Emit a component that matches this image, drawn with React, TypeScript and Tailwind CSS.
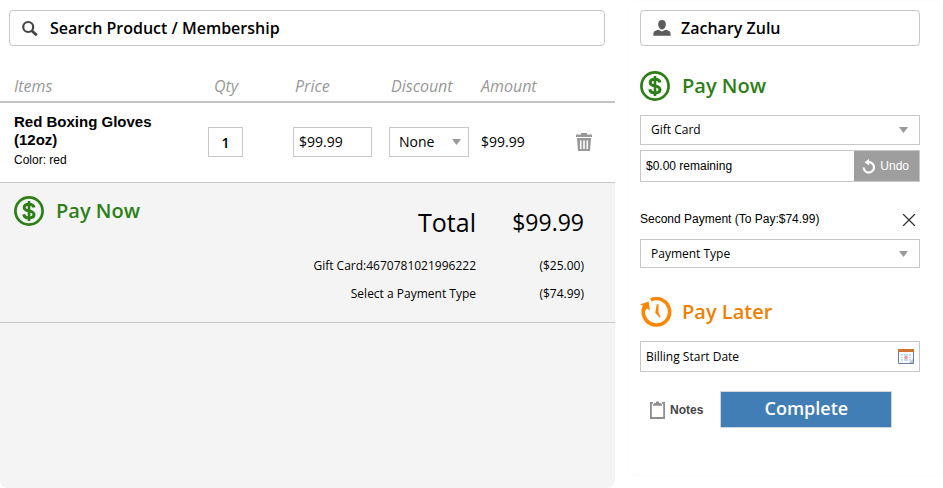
import type { ReactNode } from 'react';

function SearchIcon() {
  return (
    <svg width="16" height="16" viewBox="0 0 16 16" fill="none" stroke="#444" aria-hidden="true">
      <circle cx="6.200" cy="7" r="5" strokeWidth="2.200" />
      <path d="M9.800 10.700l5 4.600" strokeWidth="2.800" />
    </svg>
  );
}

function UserIcon() {
  return (
    <svg width="18" height="16" viewBox="0 0 18 16" fill="#5c5c5c" aria-hidden="true">
      <path d="M9 0c2.400 0 3.800 1.600 3.800 4.200 0 2.700-1.700 5.300-3.800 5.300S5.200 6.900 5.200 4.200C5.200 1.600 6.600 0 9 0z" />
      <path d="M5.500 9.800L9 11.500l3.500-1.700c1.500.4 3.500.8 4.300 1.800.8 1 .9 2.700.9 4.200H.3c0-1.500.1-3.200.9-4.200.8-1 2.800-1.400 4.300-1.800z" />
    </svg>
  );
}

function DollarIcon() {
  return (
    <svg width="30" height="30" viewBox="0 0 30 30" fill="none" stroke="#2d7f17" aria-hidden="true">
      <circle cx="15" cy="15" r="13.600" strokeWidth="2.700" />
      <path d="M15 5v20" strokeWidth="2.600" />
      <path
        d="M20 11.500C19.600 9 17.700 8.200 15 8.200c-2.900 0-4.800 1.200-4.800 3.200 0 2.300 2 2.900 4.800 3.500s5 1.200 5 3.700c0 2.200-2 3.400-5 3.400s-4.900-1.200-5.200-3.700"
        strokeWidth="3"
      />
    </svg>
  );
}

function ClockIcon() {
  return (
    <svg width="32" height="30" viewBox="0 0 32 30" fill="none" stroke="#ff8600" aria-hidden="true">
      <path d="M10.800 2.900A13.200 13.200 0 1 1 4.600 9" strokeWidth="3.600" />
      <path d="M0 7.600L8.600 4.600l1.400 8.800-3.400-2.200-2.200 4.600-2.600-1.600 1.600-5.400z" fill="#ff8600" stroke="none" />
      <path d="M18.500 7.200v8.600l2 3.900-1 .8-4.300-4.700 1.500-8.600z" fill="#ff8600" stroke="none" />
    </svg>
  );
}

function TrashIcon() {
  return (
    <svg width="16" height="18" viewBox="0 0 16 18" fill="#999" aria-hidden="true">
      <path d="M5 0h6v1.500h5V4H0V1.500h5z" />
      <path
        fillRule="evenodd"
        d="M1 5h14l-1 13H2zM4 7.500v8.500h1.500V7.500zM7.200 7.500v8.500h1.600V7.500zM10.500 7.500v8.500H12V7.500z"
      />
    </svg>
  );
}

function UndoIcon() {
  return (
    <svg width="14" height="15" viewBox="0 0 14 15" fill="none" stroke="#fff" aria-hidden="true">
      <path d="M5.500 3.300A5.200 5.200 0 1 1 1.600 8.500" strokeWidth="2.200" />
      <path d="M7 0v6.500L2.500 3.300z" fill="#fff" stroke="none" />
    </svg>
  );
}

function CalendarIcon() {
  return (
    <svg width="16" height="15" viewBox="0 0 16 15" aria-hidden="true">
      <path d="M.5 2v12.500h15V2" fill="#f8fbff" stroke="#6b7f9c" />
      <path d="M0 0h16v3H0z" fill="#cf7430" />
      <path d="M3 5h10v7H3z" fill="#c5d9ef" />
      <path d="M3 7.500h10M3 9.500h10M5.500 5v7M10.500 5v7" stroke="#fff" />
      <path d="M6.500 7h3v3h-3z" fill="#f0998c" />
      <path d="M11 14l4-4v4z" fill="#b9c0c9" />
    </svg>
  );
}

function ClipboardIcon() {
  return (
    <svg width="15" height="18" viewBox="0 0 15 18" fill="none" stroke="#8e8e8e" aria-hidden="true">
      <path d="M3 1.800H.9V17h13.200V1.800H12" strokeWidth="1.800" />
      <path d="M3 4.800V3.500L4.500 2H6V.5h3V2h1.500L12 3.500v1.300z" fill="#8e8e8e" stroke="none" />
    </svg>
  );
}

function Heading({ icon, className, children }: { icon: ReactNode; className: string; children: ReactNode }) {
  return (
    <h2 className={`flex items-center text-xl leading-7 font-semibold ${className}`}>
      {icon}
      {children}
    </h2>
  );
}

function Dropdown({ label, options, className }: { label: string; options: string[]; className: string }) {
  return (
    <div className="relative">
      <select
        aria-label={label}
        className={`block w-full appearance-none rounded-none border border-[#c8c8c8] bg-white text-black ${className}`}
      >
        {options.map((option) => (
          <option key={option}>{option}</option>
        ))}
      </select>
      <svg
        width="9"
        height="6"
        viewBox="0 0 9 6"
        fill="#999"
        aria-hidden="true"
        className="pointer-events-none absolute top-3 right-2 @min-[200px]:right-3"
      >
        <path d="M0 0h9L4.500 6z" />
      </svg>
    </div>
  );
}

const payments = [
  { name: 'Gift Card:4670781021996222', amount: '($25.00)' },
  { name: 'Select a Payment Type', amount: '($74.99)' },
];

export default function App() {
  return (
    <div className="grid min-h-screen grid-cols-[615fr_315fr] gap-x-[13px] bg-white font-['Open_Sans',sans-serif] text-black">
      {/* Cart */}
      <main className="flex flex-col">
        <div className="pt-2.5 pr-2.5 pb-[25px] pl-[9px]">
          <label className="flex h-9 items-center gap-3 rounded border border-[#c8c8c8] pl-3">
            <SearchIcon />
            <input
              type="text"
              aria-label="Search Product / Membership"
              placeholder="Search Product / Membership"
              className="min-w-0 flex-1 text-base font-semibold outline-none placeholder:text-black"
            />
          </label>
        </div>

        <table className="w-full table-fixed text-left">
          <thead>
            <tr className="h-[31px] border-b-2 border-[#c4c4c4] text-base text-[#999] italic">
              <th className="pl-3.5 font-normal">Items</th>
              <th className="w-[85px] pl-1.5 font-normal">Qty</th>
              <th className="w-24 pl-0.5 font-normal">Price</th>
              <th className="w-[92px] pl-0.5 font-normal">Discount</th>
              <th className="w-[95px] font-normal">Amount</th>
              <th className="w-[39px]" aria-label="Remove" />
            </tr>
          </thead>
          <tbody>
            <tr className="h-20 border-b border-[#c8c8c8] text-sm">
              <td className="pr-10 pb-0.5 pl-3.5 font-['Liberation_Sans',sans-serif]">
                <div className="text-[15px] leading-[18px] font-bold">Red Boxing Gloves (12oz)</div>
                <div className="pt-0.5 text-xs leading-[18px]">Color: red</div>
              </td>
              <td>
                <input
                  aria-label="Quantity"
                  defaultValue="1"
                  className="block h-[30px] w-[35px] border border-[#c8c8c8] text-center font-semibold"
                />
              </td>
              <td>
                <input
                  aria-label="Price"
                  defaultValue="$99.99"
                  className="block h-[30px] w-[79px] border border-[#c8c8c8] pb-0.5 pl-[5px]"
                />
              </td>
              <td className="pr-3">
                <Dropdown label="Discount" options={['None']} className="h-[30px] pl-[9px] text-sm" />
              </td>
              <td>$99.99</td>
              <td>
                <button aria-label="Remove item" className="block">
                  <TrashIcon />
                </button>
              </td>
            </tr>
          </tbody>
        </table>

        <section className="flex-1 rounded-b-lg bg-[#f4f4f4]">
          <div className="flex justify-between border-b border-[#c8c8c8] pt-[13px] pr-[31px] pb-3.5 pl-3.5">
            <Heading icon={<DollarIcon />} className="gap-3 self-start text-[#2d7f17]">
              Pay Now
            </Heading>
            <dl className="grid grid-cols-[auto_108px] text-right text-xs leading-7">
              <dt className="pt-2 pb-3 text-[25px] leading-9">Total</dt>
              <dd className="pt-2 pb-3 text-[23px] leading-9">$99.99</dd>
              {payments.map((payment) => (
                <div key={payment.name} className="contents">
                  <dt>{payment.name}</dt>
                  <dd>{payment.amount}</dd>
                </div>
              ))}
            </dl>
          </div>
        </section>
      </main>

      {/* Payment */}
      <aside className="@container mb-3 rounded-lg border border-[#fcfcfc] pt-[9px] pr-[22px] pl-[11px] text-xs">
        <button className="flex h-9 w-full items-center gap-2.5 rounded border border-[#c8c8c8] pl-3 text-base font-semibold">
          <UserIcon />
          Zachary Zulu
        </button>

        <section className="pt-[25px]">
          <Heading icon={<DollarIcon />} className="gap-3 text-[#2d7f17]">
            Pay Now
          </Heading>
          <div className="pt-3.5">
            <Dropdown label="Payment method" options={['Gift Card']} className="h-[30px] pl-2.5" />
          </div>
          <div className="mt-[5px] flex h-8 border border-[#c8c8c8] font-['Liberation_Sans',sans-serif]">
            <input
              aria-label="Gift card balance"
              readOnly
              value="$0.00 remaining"
              className="min-w-0 flex-1 pl-[5px] outline-none"
            />
            <button className="flex items-center gap-1 bg-[#9e9e9e] pr-2.5 pl-2 text-white">
              <UndoIcon />
              Undo
            </button>
          </div>

          <div className="flex items-center justify-between pt-7 pr-1 pb-2.5 font-['Liberation_Sans',sans-serif] leading-[19px]">
            <span>Second Payment (To Pay:$74.99)</span>
            <button aria-label="Remove second payment">
              <svg width="14" height="12" viewBox="0 0 14 12" stroke="#333" strokeWidth="1.300" aria-hidden="true">
                <path d="M1 0l12 12M13 0L1 12" />
              </svg>
            </button>
          </div>
          <Dropdown label="Second payment method" options={['Payment Type']} className="h-[29px] pl-2.5" />
        </section>

        <section className="pt-[29px]">
          <Heading icon={<ClockIcon />} className="gap-2.5 text-[#f08000]">
            Pay Later
          </Heading>
          <label className="mt-3.5 flex h-[31px] items-center border border-[#c8c8c8] px-[5px]">
            <input
              aria-label="Billing Start Date"
              placeholder="Billing Start Date"
              className="min-w-0 flex-1 outline-none placeholder:text-black"
            />
            <CalendarIcon />
          </label>
        </section>

        <div className="flex items-center gap-[17px] pt-[19px] pl-2.5">
          <button className="flex items-center gap-[5px] font-['Liberation_Sans',sans-serif] font-bold text-[#444]">
            <ClipboardIcon />
            Notes
          </button>
          <button className="h-[37px] w-[172px] border border-[#d0d5da] bg-[#407eb5] pb-1 text-lg leading-7 font-semibold text-white">
            Complete
          </button>
        </div>
      </aside>
    </div>
  );
}
